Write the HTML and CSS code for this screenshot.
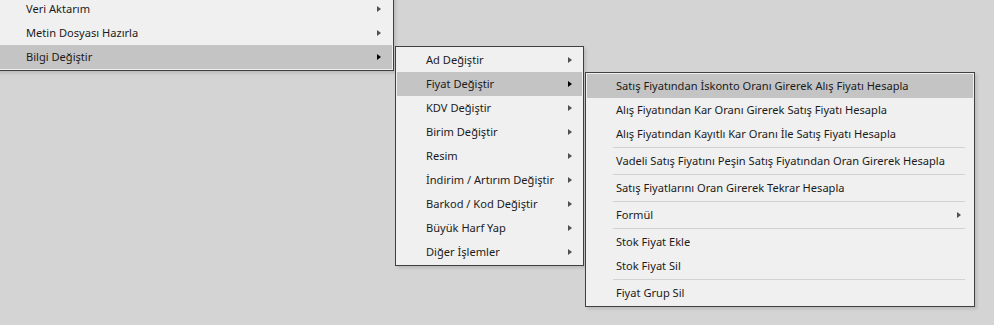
FILE: index.html
```html
<!DOCTYPE html>
<html lang="tr">
<head>
  <meta charset="UTF-8">
  <title>Menü</title>
  <link rel="stylesheet" href="styles.css">
</head>
<body>
  <ul class="menu root">
    <li class="item sub">Veri Aktarım</li>
    <li class="item sub">Metin Dosyası Hazırla</li>
    <li class="item sub active">Bilgi Değiştir
      <ul class="menu level2">
        <li class="item sub">Ad Değiştir</li>
        <li class="item sub active">Fiyat Değiştir
          <ul class="menu level3">
            <li class="item active">Satış Fiyatından İskonto Oranı Girerek Alış Fiyatı Hesapla</li>
            <li class="item">Alış Fiyatından Kar Oranı Girerek Satış Fiyatı Hesapla</li>
            <li class="item">Alış Fiyatından Kayıtlı Kar Oranı İle Satış Fiyatı Hesapla</li>
            <li class="sep"></li>
            <li class="item">Vadeli Satış Fiyatını Peşin Satış Fiyatından Oran Girerek Hesapla</li>
            <li class="sep"></li>
            <li class="item">Satış Fiyatlarını Oran Girerek Tekrar Hesapla</li>
            <li class="sep"></li>
            <li class="item sub">Formül</li>
            <li class="sep"></li>
            <li class="item">Stok Fiyat Ekle</li>
            <li class="item">Stok Fiyat Sil</li>
            <li class="sep"></li>
            <li class="item">Fiyat Grup Sil</li>
          </ul>
        </li>
        <li class="item sub">KDV Değiştir</li>
        <li class="item sub">Birim Değiştir</li>
        <li class="item sub">Resim</li>
        <li class="item sub">İndirim / Artırım Değiştir</li>
        <li class="item sub">Barkod / Kod Değiştir</li>
        <li class="item sub">Büyük Harf Yap</li>
        <li class="item sub">Diğer İşlemler</li>
      </ul>
    </li>
  </ul>
</body>
</html>
```

FILE: styles.css
```css
html {
  height: 100%;
}
body {
  margin: 0;
  min-height: 100%;
  background-color: #d4d4d4;
  font-family: "Noto Sans", sans-serif;
  font-size: 11.1px;
  color: #1b1b1b;
}
.menu {
  list-style: none;
  margin: 0;
  padding: 1px 0;
  background-color: #f0f0f0;
  border: 1px solid #404040;
  box-shadow: 2px 2px 3px rgba(0, 0, 0, 0.12);
}
.root {
  width: 397px;
  margin-left: -5px;
  transform: translateY(-5px);
}
.level2 {
  position: absolute;
  top: 1px;
  left: calc(100% + 3px);
  width: 187px;
}
.level3 {
  position: absolute;
  top: 0;
  left: calc(100% + 3px);
  width: 388px;
}
.item {
  position: relative;
  height: 24px;
  line-height: 24px;
  margin: 0 1px;
  padding-left: 29px;
  white-space: nowrap;
}
.item.active {
  background-color: #c4c4c4;
}
.sub::after {
  content: "";
  position: absolute;
  right: 11px;
  top: 9px;
  border-left: 4px solid #505050;
  border-top: 3.5px solid transparent;
  border-bottom: 3.5px solid transparent;
}
.sub.active::after {
  border-left-color: #000;
}
.level2 .sub::after {
  right: 10px;
}
.level3 .sub::after {
  right: 12px;
}
.sep {
  height: 1px;
  margin: 1px 9px 1px 27px;
  background-color: #d2d2d2;
}
```
